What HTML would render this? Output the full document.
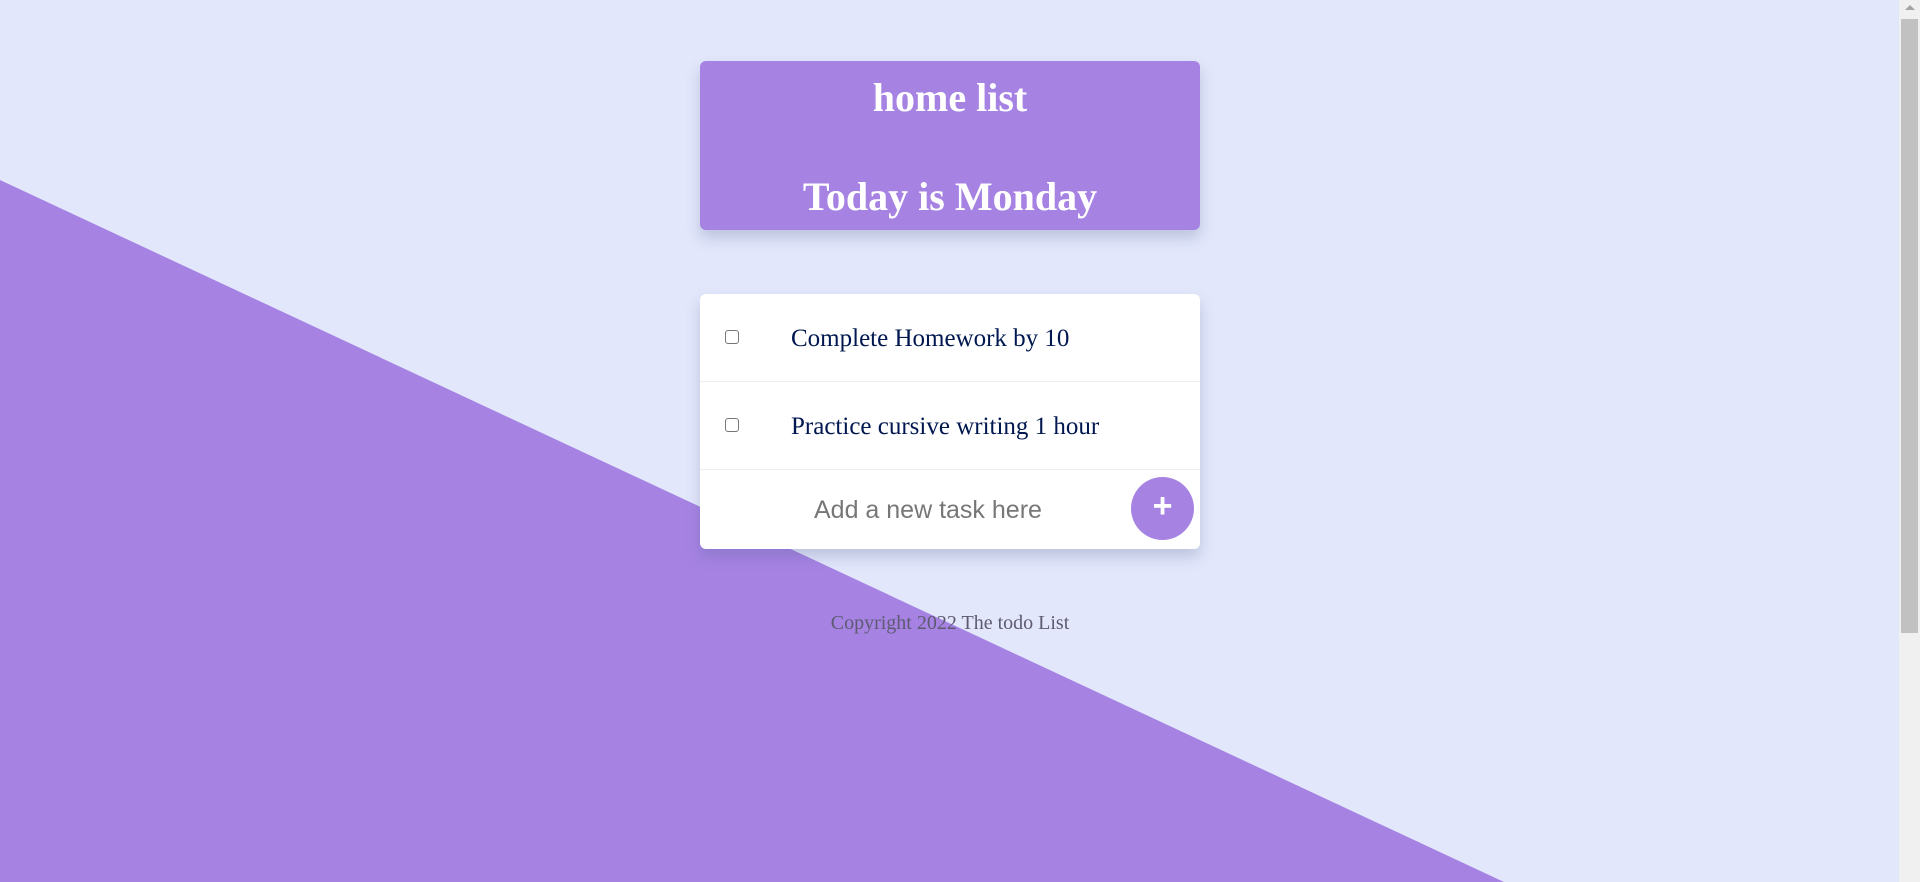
<!DOCTYPE html>
<html><head><style>
html,body{margin:0;padding:0}
body{width:1920px;height:882px;overflow:hidden;background:#e2e7fb;position:relative;font-family:"Liberation Serif",serif}
.tri{position:absolute;left:0;top:0;width:1899px;height:882px}
.hdr{position:absolute;left:700px;top:61px;width:500px;height:169px;background:#a683e3;border-radius:6px;box-shadow:0 8px 14px rgba(80,90,140,.25);color:#fff;text-align:center;font-weight:bold;font-size:40px}
.hdr div{position:absolute;left:0;right:0}
.card{position:absolute;left:700px;top:294px;width:500px;height:255px;background:#fff;border-radius:6px;box-shadow:0 8px 14px rgba(80,90,140,.25)}
.row{position:absolute;left:0;width:500px;height:88px;border-bottom:1px solid #eee;box-sizing:border-box}
.cb{position:absolute;left:25px;top:36px;width:12px;height:12px;border:1.5px solid #767676;border-radius:3px;background:#fff}
.tx{position:absolute;left:91px;top:31px;font-size:25px;color:#00174f;white-space:nowrap}
.inp{position:absolute;font-family:"Liberation Sans",sans-serif;font-size:25px;color:#777}
.btn{position:absolute;left:1131px;top:477px;width:63px;height:63px;border-radius:50%;background:#a683e3;color:#fff;font-family:"Liberation Sans",sans-serif;font-weight:bold;font-size:34px;text-align:center;line-height:58px}
.foot{position:absolute;left:700px;width:500px;top:612px;text-align:center;font-size:20px;color:#5e5a72}
.sb{position:absolute;right:0;top:0;width:21px;height:882px;background:#f0f0f0}
.th{position:absolute;left:2px;top:19px;width:17px;height:614px;background:#c1c1c1}
</style></head><body>
<svg class="tri" viewBox="0 0 1899 882"><polygon points="0,180 1504,882 0,882" fill="#a683e3"/></svg>
<div class="hdr"><div style="top:13px">home list</div><div style="top:112px">Today is Monday</div></div>
<div class="card">
<div class="row" style="top:0"><div class="cb"></div><div class="tx">Complete Homework by 10</div></div>
<div class="row" style="top:88px"><div class="cb"></div><div class="tx">Practice cursive writing 1 hour</div></div>
</div>
<div class="inp" style="left:814px;top:496px">Add a new task here</div>
<div class="btn">+</div>
<div class="foot">Copyright 2022 The todo List</div>
<div class="sb"><div style="position:absolute;left:6px;top:5px;width:0;height:0;border-left:5px solid transparent;border-right:5px solid transparent;border-bottom:5px solid #a3a3a3"></div><div class="th"></div></div>
</body></html>
